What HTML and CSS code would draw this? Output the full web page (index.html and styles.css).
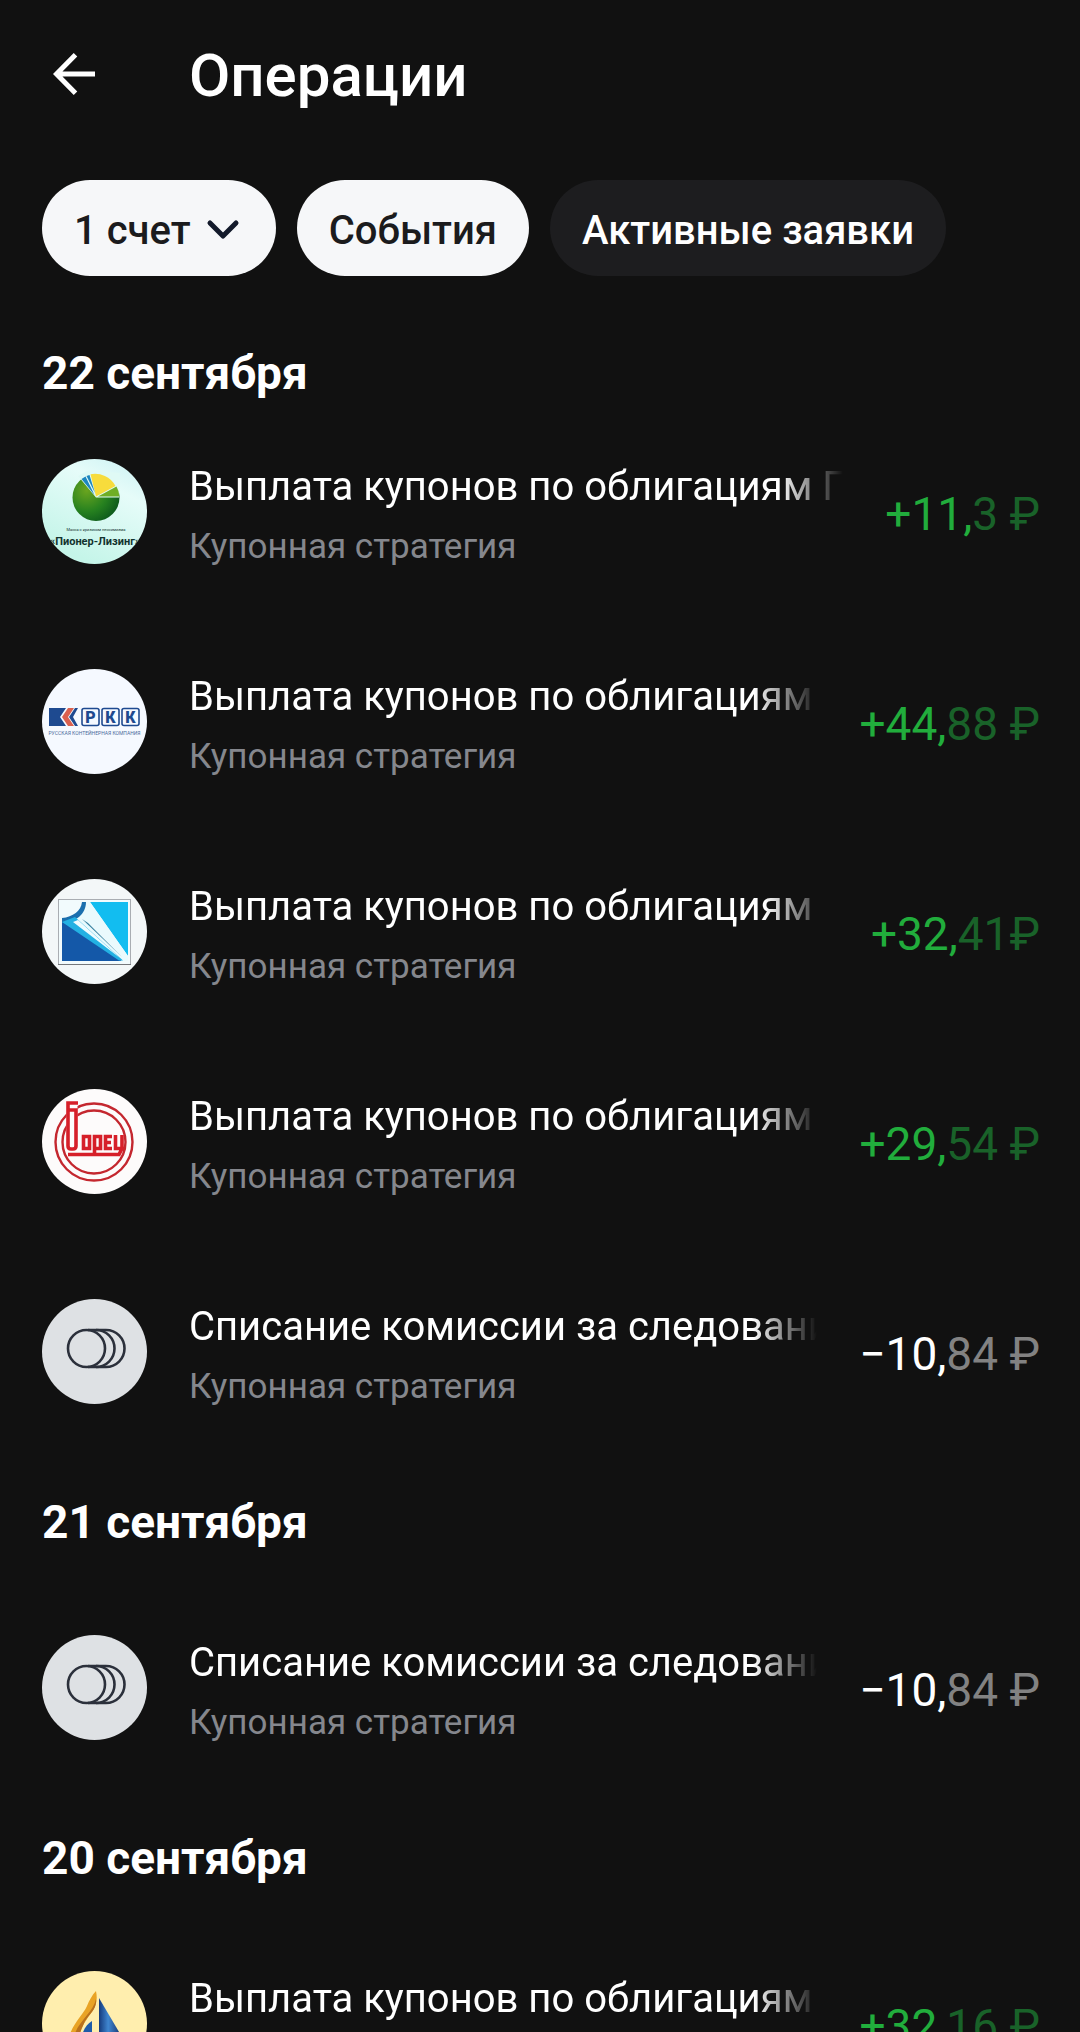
FILE: index.html
```html
<!DOCTYPE html>
<html lang="ru">
  <head>
    <meta charset="UTF-8" />
    <meta name="viewport" content="width=device-width, initial-scale=1.0" />
    <title>Операции</title>
    <link rel="stylesheet" href="styles.css">
  </head>
  <body>
    <!-- Shared icon for commission rows -->
    <svg class="sprite" aria-hidden="true">
      <symbol id="coins" viewBox="0 0 105 105">
        <rect width="105" height="105" fill="#dee1e4" />
        <g fill="none" stroke="#2b303b" stroke-width="2.6">
          <circle cx="44.500" cy="49.500" r="18.500" />
          <path d="M46 31h8a18.500 18.500 0 0 1 0 37h-8" />
          <path d="M54 31h10a18.500 18.500 0 0 1 0 37H54" />
        </g>
      </symbol>
    </svg>

    <header class="topbar">
      <button class="back" type="button" aria-label="Назад">
        <svg width="42" height="42" viewBox="0 0 42 42" fill="none" stroke="#fff" stroke-width="5">
          <path d="M42 21H4M22.500 1.800L3.500 21l19 19.200" />
        </svg>
      </button>
      <h1>Операции</h1>
    </header>

    <nav class="chips">
      <button class="chip" type="button">
        1 счет
        <svg width="38" height="22" viewBox="0 0 38 22" fill="none" stroke="#131a2b" stroke-width="5" stroke-linecap="round" stroke-linejoin="round">
          <path d="M4 4l13 13L30 4" />
        </svg>
      </button>
      <button class="chip" type="button">События</button>
      <button class="chip dark" type="button">Активные заявки</button>
    </nav>

    <main>
      <section class="day">
        <h2>22 сентября</h2>
        <ul>
          <li class="operation">
            <svg class="logo" viewBox="0 0 105 105">
              <defs>
                <linearGradient id="mint" x1="1" y1="0" x2="0.500" y2="1">
                  <stop offset="0" stop-color="#c9f1f3" />
                  <stop offset="0.350" stop-color="#e6fcf9" />
                  <stop offset="1" stop-color="#c5f5e9" />
                </linearGradient>
                <radialGradient id="ball" cx="0.300" cy="0.350" r="0.750">
                  <stop offset="0" stop-color="#6aa51f" />
                  <stop offset="0.600" stop-color="#26811f" />
                  <stop offset="1" stop-color="#0d5a1c" />
                </radialGradient>
              </defs>
              <rect width="105" height="105" fill="url(#mint)" />
              <circle cx="54" cy="38.500" r="23.500" fill="url(#ball)" />
              <path d="M54 38.500L36 17l9-5 5-1 28 3-1 24.500z" fill="#dffaf5" />
              <path d="M54 37.500L48.500 15.300A23.500 23.500 0 0 1 73.500 27z" fill="#f7dc3c" />
              <path d="M56 37.500L74.500 27.500A23 23 0 0 1 77.500 37.500z" fill="#6fae25" />
              <path d="M52.500 36L39.500 20l4-2.500zM53 34L44.500 17l3-1z" fill="#1d86bf" />
              <text class="slogan" x="54" y="72" text-anchor="middle">Масса с кризисом пессимизма</text>
              <text class="pioneer" x="53" y="86" text-anchor="middle">«Пионер-Лизинг»</text>
            </svg>
            <div class="info">
              <h3>Выплата купонов по облигациям П</h3>
              <p>Купонная стратегия</p>
            </div>
            <div class="amount income">+11,<span>3 ₽</span></div>
          </li>
          <li class="operation">
            <svg class="logo" viewBox="0 0 105 105">
              <rect width="105" height="105" fill="#f5f9ff" />
              <path d="M7 39h17l-6 9 6 9H7z" fill="#1e4a90" />
              <path d="M32 39h-6l-6 9 6 9h6l-6-9z" fill="#d9604f" />
              <path d="M36 39h-3l-6 9 6 9h3l-5-9z" fill="#1e4a90" />
              <g fill="none" stroke="#1e4a90" stroke-width="1.600">
                <rect x="40" y="39.500" width="17" height="17" rx="2" />
                <rect x="60" y="39.500" width="17" height="17" rx="2" />
                <rect x="80" y="39.500" width="17" height="17" rx="2" />
              </g>
              <g class="rkk" text-anchor="middle">
                <text x="48.500" y="54">Р</text>
                <text x="68.500" y="54">К</text>
                <text x="88.500" y="54">К</text>
              </g>
              <text class="rkk-name" x="52.500" y="66" text-anchor="middle">РУССКАЯ КОНТЕЙНЕРНАЯ КОМПАНИЯ</text>
            </svg>
            <div class="info">
              <h3>Выплата купонов по облигациям</h3>
              <p>Купонная стратегия</p>
            </div>
            <div class="amount income">+44,<span>88 ₽</span></div>
          </li>
          <li class="operation">
            <svg class="logo" viewBox="0 0 105 105">
              <rect width="105" height="105" fill="#f3f7f8" />
              <rect x="16.500" y="20.500" width="72" height="65" fill="#f2fbfd" stroke="#a9adb2" />
              <path d="M16 85.500h73" stroke="#74777b" />
              <path d="M48 23h38v54z" fill="#12bdf0" />
              <path d="M20 42V82h60z" fill="#1458a8" />
              <path d="M20 42c13 0 22-8 23-19h5l38 54v5h-6z" fill="#eafafd" />
              <path d="M20 39c11-1 19-7 20-16h4c0 12-10 20-24 21z" fill="#1b6fae" />
              <path d="M20 43l13-5 48 43.500h-4z" fill="#23b1e3" />
              <path d="M31 43l5-2 42 38z" fill="#effcff" />
              <path d="M40 40l40 38-34-34z" fill="#347f9e" />
            </svg>
            <div class="info">
              <h3>Выплата купонов по облигациям</h3>
              <p>Купонная стратегия</p>
            </div>
            <div class="amount income">+32,<span>41₽</span></div>
          </li>
          <li class="operation">
            <svg class="logo" viewBox="0 0 105 105">
              <rect width="105" height="105" fill="#fdfbfb" />
              <g fill="none" stroke="#c4272f" stroke-width="2.400">
                <circle cx="52" cy="53" r="38.500" />
                <circle cx="52" cy="53" r="31.500" />
              </g>
              <path d="M24.500 13h11v46h-11z" fill="#fdfbfb" />
              <g fill="none" stroke="#d61f29" stroke-width="3.600">
                <path d="M36 14H26v43q0 3 3 3h2q3 0 3-3V21h-8" />
                <path d="M41.500 47.500h6v12h-6zM52.500 65V47.500h6v12h-6M70 47.500h-6.500v12H70M63.500 53.500H69M73.500 46v13.500H82M80 46v13.500l-3 6H26" />
              </g>
            </svg>
            <div class="info">
              <h3>Выплата купонов по облигациям</h3>
              <p>Купонная стратегия</p>
            </div>
            <div class="amount income">+29,<span>54 ₽</span></div>
          </li>
          <li class="operation">
            <svg class="logo"><use href="#coins" /></svg>
            <div class="info">
              <h3>Списание комиссии за следование</h3>
              <p>Купонная стратегия</p>
            </div>
            <div class="amount">−10,<span>84 ₽</span></div>
          </li>
        </ul>
      </section>

      <section class="day">
        <h2>21 сентября</h2>
        <ul>
          <li class="operation">
            <svg class="logo"><use href="#coins" /></svg>
            <div class="info">
              <h3>Списание комиссии за следование</h3>
              <p>Купонная стратегия</p>
            </div>
            <div class="amount">−10,<span>84 ₽</span></div>
          </li>
        </ul>
      </section>

      <section class="day">
        <h2>20 сентября</h2>
        <ul>
          <li class="operation">
            <svg class="logo" viewBox="0 0 105 105">
              <defs>
                <linearGradient id="sail">
                  <stop offset="0" stop-color="#153a7c" />
                  <stop offset="0.400" stop-color="#3f86d0" />
                  <stop offset="1" stop-color="#142c66" />
                </linearGradient>
              </defs>
              <rect width="105" height="105" fill="#ffeeae" />
              <path d="M54 20c3 15-4 20-9 28-4 6-7 11-7 18H27c4-14 14-22 18-31 2-5 5-11 9-15z" fill="#e9a325" />
              <path d="M54 28c1 10-6 14-11 22l-7 16h-4c3-15 19-24 22-38z" fill="#b8701c" />
              <path d="M57 27l23 39H57z" fill="url(#sail)" />
              <path d="M50 50v16H40c1-8 5-13 10-16z" fill="#1f5ba8" />
            </svg>
            <div class="info">
              <h3>Выплата купонов по облигациям</h3>
              <p>Купонная стратегия</p>
            </div>
            <div class="amount income">+32,<span>16 ₽</span></div>
          </li>
        </ul>
      </section>
    </main>
  </body>
</html>
```
FILE: styles.css
```css
* {
  box-sizing: border-box;
}
html,
body {
  height: 100%;
}
body {
  margin: 0;
  overflow: hidden;
  background-color: #111;
  color: #fff;
  font-family: Roboto, sans-serif;
}
h1,
h2,
h3,
p,
ul {
  margin: 0;
  padding: 0;
}
ul {
  list-style: none;
}
button {
  border: none;
  font-family: inherit;
  cursor: pointer;
}
.sprite {
  display: none;
}

/* Header */
.topbar {
  display: flex;
  align-items: center;
  height: 152px;
  padding: 0 42px;
}
.back {
  width: 147px;
  padding: 0 0 4px 11px;
  background: none;
  text-align: left;
}
.back svg {
  display: block;
}
h1 {
  font-size: 60px;
  font-weight: 500;
  line-height: 70px;
}

/* Filters */
.chips {
  display: flex;
  gap: 21px;
  padding: 28px 42px 34px;
}
.chip {
  display: flex;
  align-items: center;
  gap: 15px;
  height: 96px;
  padding: 4px 32px 0;
  border-radius: 48px;
  background-color: #f6f7f9;
  color: #1b1b1d;
  font-size: 40px;
  font-weight: 500;
}
.chip.dark {
  background-color: #1d1d1f;
  color: #fff;
}

/* Operations grouped by day */
.day h2 {
  padding: 37px 42px 31px;
  font-size: 46px;
  font-weight: 700;
  line-height: 58px;
}
.day:first-child h2 {
  padding: 34px 42px 4px;
}
.operation {
  display: flex;
  align-items: center;
  height: 210px;
  padding: 0 40px 0 42px;
}
.logo {
  flex: none;
  width: 105px;
  height: 105px;
  margin-right: 42px;
  border-radius: 50%;
}
.info {
  flex: 1;
  min-width: 0;
  padding-top: 11px;
}
.info h3 {
  overflow: hidden;
  font-size: 40px;
  font-weight: 400;
  line-height: 60px;
  white-space: nowrap;
  -webkit-mask-image: linear-gradient(to left, transparent, #000 64px);
  mask-image: linear-gradient(to left, transparent, #000 64px);
}
.info p {
  color: #85878d;
  font-size: 35px;
  line-height: 60px;
}
.amount {
  margin-left: 42px;
  padding-top: 6px;
  font-size: 46px;
  white-space: nowrap;
}
.amount span {
  color: #828282;
}
.amount.income {
  color: #21ad3c;
}
.amount.income span {
  color: #196229;
}

/* Lettering inside logos */
.slogan {
  font: 4px Roboto, sans-serif;
  fill: #12332f;
}
.pioneer {
  font: 700 11px Roboto, sans-serif;
  fill: #12332f;
}
.rkk {
  font: 900 16px Roboto, sans-serif;
  fill: #1e4a90;
}
.rkk-name {
  font: 5px Roboto, sans-serif;
  fill: #4c6c9d;
}
```
